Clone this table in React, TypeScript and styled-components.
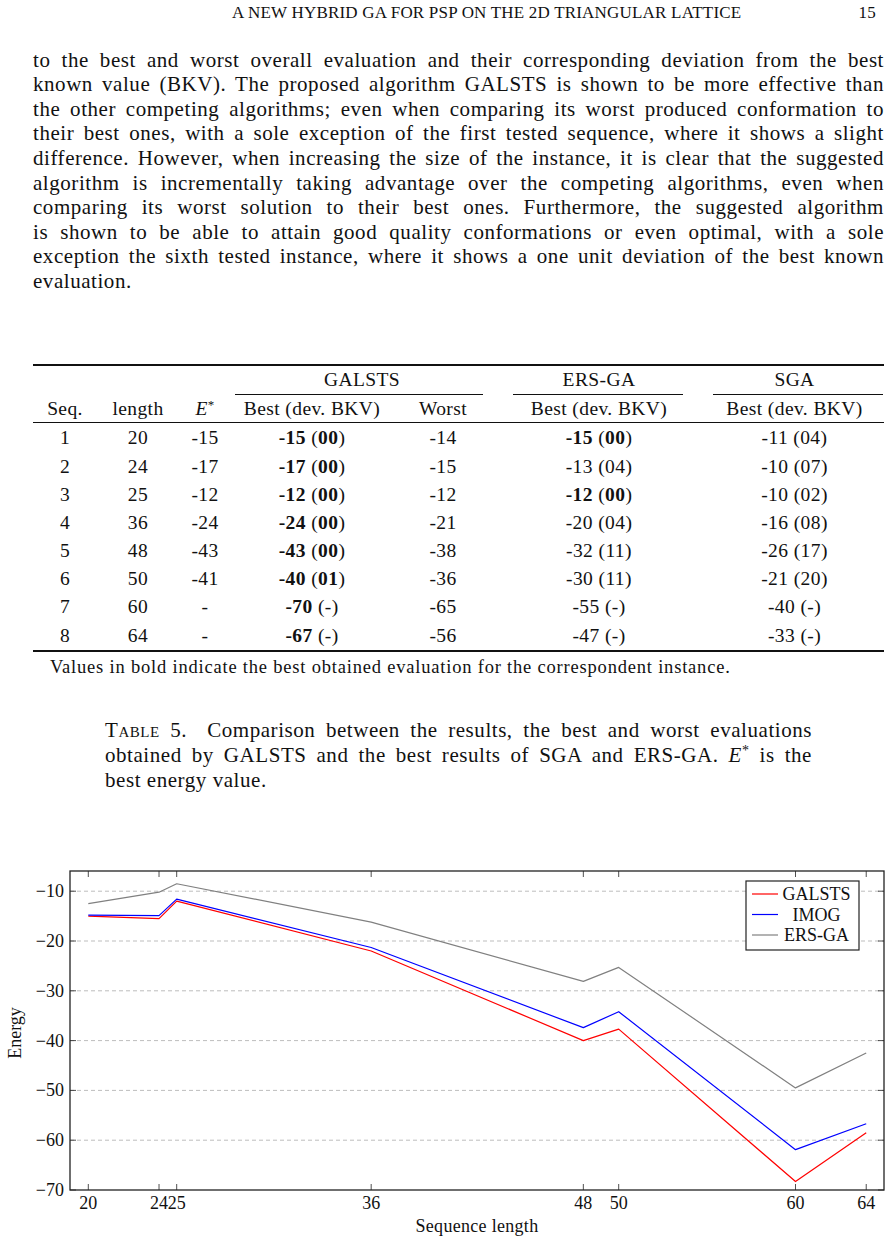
import styled, { createGlobalStyle } from 'styled-components';

const GlobalStyle = createGlobalStyle`
  body {
    margin: 0;
    background: #fff;
    color: #111;
    font-family: 'Liberation Serif', 'Times New Roman', serif;
  }
`;

const bodyLines = [
  'to the best and worst overall evaluation and their corresponding deviation from the best',
  'known value (BKV). The proposed algorithm GALSTS is shown to be more effective than',
  'the other competing algorithms; even when comparing its worst produced conformation to',
  'their best ones, with a sole exception of the first tested sequence, where it shows a slight',
  'difference. However, when increasing the size of the instance, it is clear that the suggested',
  'algorithm is incrementally taking advantage over the competing algorithms, even when',
  'comparing its worst solution to their best ones.  Furthermore, the suggested algorithm',
  'is shown to be able to attain good quality conformations or even optimal, with a sole',
  'exception the sixth tested instance, where it shows a one unit deviation of the best known',
  'evaluation.',
];

type Score = { v: string; dev: string; bold?: boolean };

const rows: { seq: number; len: number; e: string; galsts: Score; worst: string; ers: Score; sga: Score }[] = [
  { seq: 1, len: 20, e: '-15', galsts: { v: '-15', dev: '00', bold: true }, worst: '-14', ers: { v: '-15', dev: '00', bold: true }, sga: { v: '-11', dev: '04' } },
  { seq: 2, len: 24, e: '-17', galsts: { v: '-17', dev: '00', bold: true }, worst: '-15', ers: { v: '-13', dev: '04' }, sga: { v: '-10', dev: '07' } },
  { seq: 3, len: 25, e: '-12', galsts: { v: '-12', dev: '00', bold: true }, worst: '-12', ers: { v: '-12', dev: '00', bold: true }, sga: { v: '-10', dev: '02' } },
  { seq: 4, len: 36, e: '-24', galsts: { v: '-24', dev: '00', bold: true }, worst: '-21', ers: { v: '-20', dev: '04' }, sga: { v: '-16', dev: '08' } },
  { seq: 5, len: 48, e: '-43', galsts: { v: '-43', dev: '00', bold: true }, worst: '-38', ers: { v: '-32', dev: '11' }, sga: { v: '-26', dev: '17' } },
  { seq: 6, len: 50, e: '-41', galsts: { v: '-40', dev: '01', bold: true }, worst: '-36', ers: { v: '-30', dev: '11' }, sga: { v: '-21', dev: '20' } },
  { seq: 7, len: 60, e: '-', galsts: { v: '-70', dev: '-', bold: true }, worst: '-65', ers: { v: '-55', dev: '-' }, sga: { v: '-40', dev: '-' } },
  { seq: 8, len: 64, e: '-', galsts: { v: '-67', dev: '-', bold: true }, worst: '-56', ers: { v: '-47', dev: '-' }, sga: { v: '-33', dev: '-' } },
];

// chart data
const xs = [20, 24, 25, 36, 48, 50, 60, 64];
const series = [
  { name: 'GALSTS', color: '#ff0000', data: [-15, -15.5, -12, -22, -40, -37.7, -68.3, -58.5] },
  { name: 'IMOG', color: '#0000ff', data: [-14.8, -14.9, -11.6, -21.3, -37.4, -34.2, -61.9, -56.7] },
  { name: 'ERS-GA', color: '#808080', data: [-12.5, -10.2, -8.5, -16.2, -28.1, -25.3, -49.5, -42.5] },
];
const yTicks = [-10, -20, -30, -40, -50, -60, -70];

const L = 70;
const R = 884;
const T = 9;
const B = 328;
const sx = (v: number) => 88.3 + (v - 20) * 17.68;
const sy = (e: number) => B - (e + 70) * 4.98;

const ScoreText = ({ s }: { s: Score }) => {
  if (!s.bold) return <span>{`${s.v} (${s.dev})`}</span>;
  if (s.dev === '-')
    return (
      <span>
        <b>{s.v}</b>
        {' (-)'}
      </span>
    );
  return (
    <span>
      <b>{s.v}</b>
      {' ('}
      <b>{s.dev}</b>
      {')'}
    </span>
  );
};

const Chart = () => (
  <svg width="891" height="380" viewBox="0 0 891 380">
    {yTicks.slice(0, 6).map((t) => (
      <line key={t} x1={L} x2={R} y1={sy(t)} y2={sy(t)} stroke="#bdbdbd" strokeWidth="1" strokeDasharray="4 3" />
    ))}
    {xs.map((x) => (
      <g key={x} stroke="#222" strokeWidth="0.8">
        <line x1={sx(x)} x2={sx(x)} y1={B} y2={B - 6} />
        <line x1={sx(x)} x2={sx(x)} y1={T} y2={T + 6} />
      </g>
    ))}
    {yTicks.map((t) => (
      <g key={t} stroke="#222" strokeWidth="0.8">
        <line x1={R} x2={R - 6} y1={sy(t)} y2={sy(t)} />
        <line x1={L} x2={L + 6} y1={sy(t)} y2={sy(t)} />
      </g>
    ))}
    {series.map((s) => (
      <polyline
        key={s.name}
        fill="none"
        stroke={s.color}
        strokeWidth="1.2"
        strokeLinejoin="round"
        points={s.data.map((e, i) => `${sx(xs[i])},${sy(e)}`).join(' ')}
      />
    ))}
    <rect x={L} y={T} width={R - L} height={B - T} fill="none" stroke="#222" strokeWidth="1.3" />
    <g fontFamily="'Liberation Serif', serif" fontSize="18" fill="#111">
      {yTicks.map((t) => (
        <text key={t} x={64} y={sy(t)} textAnchor="end" dominantBaseline="central">
          {`\u2212${Math.abs(t)}`}
        </text>
      ))}
      {xs.map((x) => (
        <text key={x} x={sx(x)} y={341} textAnchor="middle" dominantBaseline="central">
          {x}
        </text>
      ))}
      <text x={477} y={364} textAnchor="middle" dominantBaseline="central" letterSpacing="0.3">
        Sequence length
      </text>
      <text x={15} y={171} textAnchor="middle" dominantBaseline="central" transform="rotate(-90 15 171)">
        Energy
      </text>
    </g>
    <g>
      <rect x={746} y={19} width={113} height={69} fill="#fff" stroke="#222" strokeWidth="1.2" />
      {series.map((s, i) => (
        <g key={s.name}>
          <line x1={752} x2={778} y1={32 + i * 20.5} y2={32 + i * 20.5} stroke={s.color} strokeWidth="1.2" />
          <text
            x={816.5}
            y={32 + i * 20.5}
            textAnchor="middle"
            dominantBaseline="central"
            fontFamily="'Liberation Serif', serif"
            fontSize="18"
            fill="#111"
          >
            {s.name}
          </text>
        </g>
      ))}
    </g>
  </svg>
);

const App = () => {
  return (
    <Page>
      <GlobalStyle />
      <RunningHead>
        <HeadTitle>A NEW HYBRID GA FOR PSP ON THE 2D TRIANGULAR LATTICE</HeadTitle>
        <PageNo>15</PageNo>
      </RunningHead>
      <TextColumn>
        <Paragraph>
          {bodyLines.map((l, i) => (
            <Line key={i} $last={i === bodyLines.length - 1}>
              {l}
            </Line>
          ))}
        </Paragraph>

        <TableBlock>
          <Rule $weight={2} />
          <GroupRow>
            <GroupCell $col="4 / span 2" $trimLeft={4} $trimRight={10}>
              <span>GALSTS</span>
            </GroupCell>
            <GroupCell $col="6" $trimLeft={20} $trimRight={22}>
              <span>ERS-GA</span>
            </GroupCell>
            <GroupCell $col="7" $trimLeft={8} $trimRight={1}>
              <span>SGA</span>
            </GroupCell>
          </GroupRow>
          <HeadRow>
            <Cell>Seq.</Cell>
            <Cell>length</Cell>
            <Cell>
              <i>E</i>
              <sup>*</sup>
            </Cell>
            <Cell>Best (dev. BKV)</Cell>
            <Cell>Worst</Cell>
            <Cell>Best (dev. BKV)</Cell>
            <Cell>Best (dev. BKV)</Cell>
          </HeadRow>
          <Rule $weight={1.3} />
          <Body>
            {rows.map((r) => (
              <DataRow key={r.seq}>
                <Cell>{r.seq}</Cell>
                <Cell>{r.len}</Cell>
                <Cell>{r.e}</Cell>
                <Cell>
                  <ScoreText s={r.galsts} />
                </Cell>
                <Cell>{r.worst}</Cell>
                <Cell>
                  <ScoreText s={r.ers} />
                </Cell>
                <Cell>
                  <ScoreText s={r.sga} />
                </Cell>
              </DataRow>
            ))}
          </Body>
          <Rule $weight={2} />
          <Footnote>Values in bold indicate the best obtained evaluation for the correspondent instance.</Footnote>
        </TableBlock>

        <Caption>
          <CaptionLine>
            <CaptionLabel>Table 5.</CaptionLabel>Comparison between the results, the best and worst evaluations
          </CaptionLine>
          <CaptionLine>
            obtained by GALSTS and the best results of SGA and ERS-GA. <i>E</i>
            <sup>*</sup> is the
          </CaptionLine>
          <CaptionLine $last>best energy value.</CaptionLine>
        </Caption>
      </TextColumn>

      <Figure>
        <Chart />
      </Figure>
    </Page>
  );
};

export default App;

const Page = styled.div`
  width: 891px;
  height: 1244px;
  overflow: hidden;
  display: flex;
  flex-direction: column;
`;

const RunningHead = styled.div`
  display: flex;
  align-items: center;
  height: 20px;
  padding: 3px 8px 0 232px;
  font-size: 17px;
  line-height: 20px;
  letter-spacing: 0.2px;
`;

const HeadTitle = styled.div`
  flex: 1;
  white-space: nowrap;
`;

const PageNo = styled.div`
  padding-right: 7px;
`;

const TextColumn = styled.div`
  padding: 0 7px 0 33px;
`;

const Paragraph = styled.div`
  margin-top: 24.6px;
  font-size: 21px;
  line-height: 24.6px;
  letter-spacing: 0.55px;
`;

const Line = styled.div<{ $last?: boolean }>`
  white-space: nowrap;
  text-align: ${(p) => (p.$last ? 'left' : 'justify')};
  text-align-last: ${(p) => (p.$last ? 'left' : 'justify')};
`;

const TableBlock = styled.div`
  margin-top: 70px;
  font-size: 19.5px;
  letter-spacing: 0.4px;
`;

const Rule = styled.div<{ $weight: number }>`
  height: ${(p) => p.$weight}px;
  background: #111;
`;

const columns = '64px 82px 52px 162px 100px 212px 179px';

const GroupRow = styled.div`
  display: grid;
  grid-template-columns: ${columns};
`;

const GroupCell = styled.div<{ $col: string; $trimLeft: number; $trimRight: number }>`
  grid-column: ${(p) => p.$col};
  display: flex;
  flex-direction: column;
  span {
    height: 28px;
    line-height: 28px;
    text-align: center;
  }
  &::after {
    content: '';
    height: 1.5px;
    background: #111;
    margin: 0 ${(p) => p.$trimRight}px 0 ${(p) => p.$trimLeft}px;
  }
`;

const HeadRow = styled.div`
  display: grid;
  grid-template-columns: ${columns};
  height: 27px;
  line-height: 27px;
  sup {
    font-size: 13px;
    line-height: 0;
    vertical-align: 6px;
  }
`;

const Body = styled.div`
  padding-top: 1px;
`;

const DataRow = styled.div`
  display: grid;
  grid-template-columns: ${columns};
  height: 28.2px;
  line-height: 28.2px;
  b {
    font-weight: 700;
  }
`;

const Cell = styled.div`
  text-align: center;
  white-space: nowrap;
`;

const Footnote = styled.div`
  margin-top: 4px;
  padding-left: 17px;
  font-size: 18.5px;
  line-height: 22px;
  letter-spacing: 0.8px;
  white-space: nowrap;
`;

const Caption = styled.div`
  margin: 40px 0 0 72px;
  width: 707px;
  font-size: 21px;
  line-height: 25px;
  letter-spacing: 0.55px;
  sup {
    font-size: 14px;
    line-height: 0;
    vertical-align: 7px;
  }
`;

const CaptionLine = styled.div<{ $last?: boolean }>`
  white-space: nowrap;
  text-align: ${(p) => (p.$last ? 'left' : 'justify')};
  text-align-last: ${(p) => (p.$last ? 'left' : 'justify')};
`;

const CaptionLabel = styled.span`
  font-variant: small-caps;
  margin-right: 20px;
`;

const Figure = styled.div`
  margin-top: 69px;
  height: 380px;
  svg {
    display: block;
  }
`;
